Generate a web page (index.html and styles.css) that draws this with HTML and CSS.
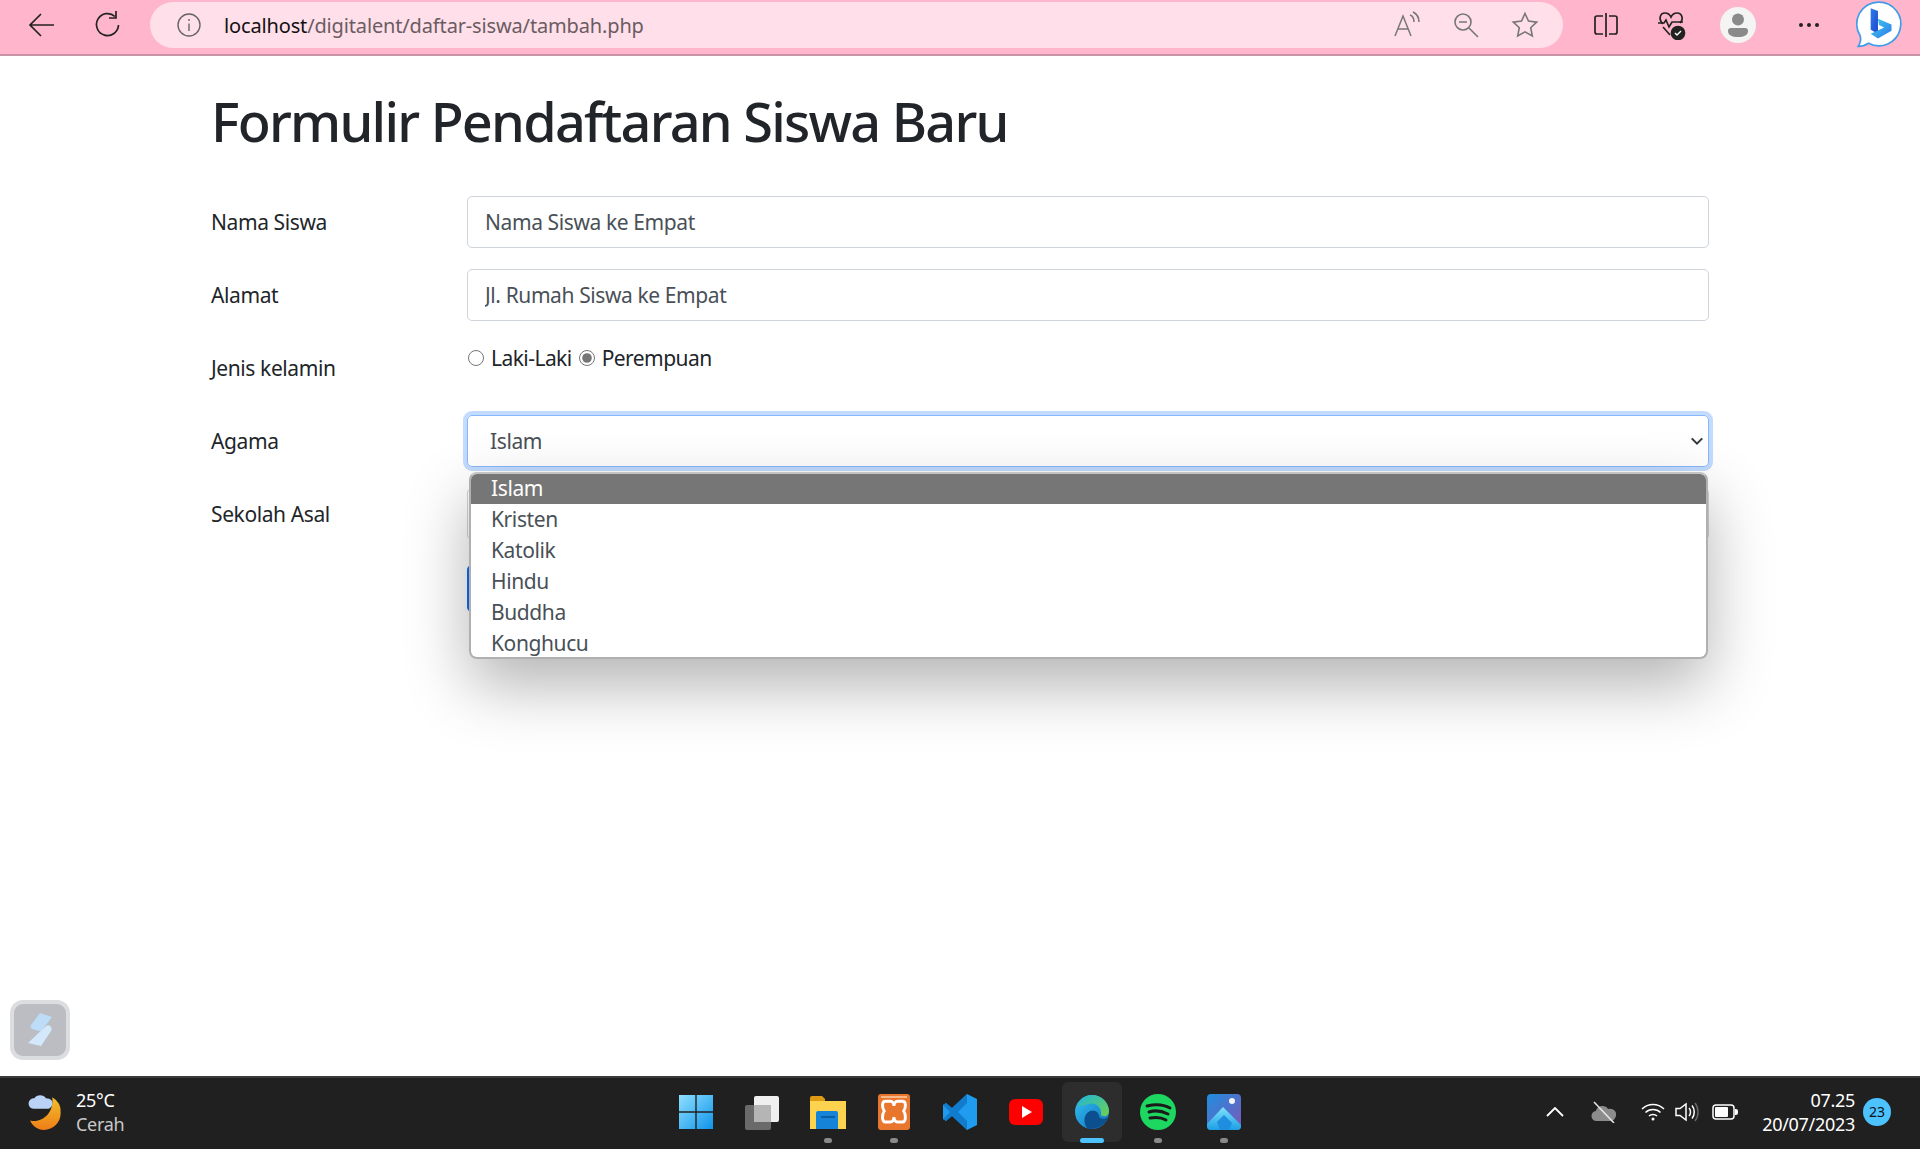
FILE: index.html
```html
<!DOCTYPE html>
<html lang="id">
<head>
    <meta charset="UTF-8">
    <meta name="viewport" content="width=device-width, initial-scale=1.0">
    <title>Formulir Pendaftaran Siswa Baru</title>
    <link rel="stylesheet" href="styles.css">
</head>
<body>
    <!-- toolbar browser -->
    <header class="toolbar">
        <button class="tool tool-back" type="button">
            <svg width="28" height="28" viewBox="0 0 28 28" fill="none" stroke="#222" stroke-width="1.7"><path d="M2 14h24M13 3L2 14l11 11"/></svg>
        </button>
        <button class="tool tool-reload" type="button">
            <svg width="28" height="28" viewBox="0 0 28 28" fill="none" stroke="#222" stroke-width="1.7"><path d="M21 5.500A11 11 0 1 0 24.500 14"/><path d="M22 0v7h-7"/></svg>
        </button>
        <div class="address">
            <svg class="addr-info" width="26" height="26" viewBox="0 0 26 26" fill="none" stroke="#666" stroke-width="1.4"><circle cx="13" cy="13" r="11"/><path d="M13 11.500V19M13 7v2"/></svg>
            <div class="url"><span class="host">localhost</span>/digitalent/daftar-siswa/tambah.php</div>
            <div class="addr-tools">
                <svg width="28" height="28" viewBox="0 0 28 28" fill="none" stroke="#777" stroke-width="1.5"><path d="M2 25L10 5l8 20M5 18h10M17 4c3 1 4 4 4 7M20 1c4 2 6 6 6 10"/></svg>
                <svg width="28" height="28" viewBox="0 0 28 28" fill="none" stroke="#777" stroke-width="1.6"><circle cx="11" cy="11" r="8"/><path d="M7 11h8M17 17l9 9"/></svg>
                <svg width="28" height="28" viewBox="0 0 28 28" fill="none" stroke="#777" stroke-width="1.6"><path d="M14 2.500l3.500 7.600 8.200 1-6 5.600 1.600 8.200-7.300-4.100-7.300 4.100 1.600-8.200-6-5.600 8.200-1z"/></svg>
            </div>
        </div>
        <div class="tool-group">
            <span class="tool-slot">
                <svg width="26" height="26" viewBox="0 0 26 26" fill="none" stroke="#222" stroke-width="1.7"><path d="M10 4H4a2 2 0 0 0-2 2v14a2 2 0 0 0 2 2h6M16 4h6a2 2 0 0 1 2 2v14a2 2 0 0 1-2 2h-6M13 1v24"/></svg>
            </span>
            <span class="tool-slot">
                <svg width="30" height="30" viewBox="0 0 30 30" fill="none" stroke="#222" stroke-width="1.7"><path d="M6 14C1 9 3 3 8 3c3 0 5 2 6 4 1-2 3-4 6-4 5 0 7 6 3 10"/><path d="M1 13h6l2-3 3 7 3-5h11"/><path d="M6 17l7 8"/><circle cx="21" cy="23" r="6.500" fill="#222"/><path d="M18 23l2 2 4-4" stroke="#fff" stroke-width="1.4"/></svg>
            </span>
            <span class="tool-slot">
                <span class="avatar">
                    <svg width="24" height="26" viewBox="0 0 24 26" fill="#8a8a8a"><circle cx="12" cy="7.500" r="6"/><path d="M2 19a3 3 0 0 1 3-3h14a3 3 0 0 1 3 3c0 4-4 6-10 6S2 23 2 19z"/></svg>
                </span>
            </span>
            <span class="tool-slot tool-dots">
                <svg width="22" height="6" viewBox="0 0 22 6" fill="#222"><circle cx="3" cy="3" r="2"/><circle cx="11" cy="3" r="2"/><circle cx="19" cy="3" r="2"/></svg>
            </span>
            <span class="tool-slot tool-bing">
                <svg width="46" height="48" viewBox="0 0 46 48">
                    <defs>
                        <linearGradient id="bingA" x1="0" y1="0" x2="1" y2="1"><stop offset="0" stop-color="#2f7df0"/><stop offset="1" stop-color="#1b46c8"/></linearGradient>
                        <linearGradient id="bingB" x1="0" y1="0" x2="1" y2="1"><stop offset="0" stop-color="#3ed0f0"/><stop offset="1" stop-color="#2f77ea"/></linearGradient>
                    </defs>
                    <path d="M23 2a21 21 0 1 1-10 39.500c-3 2-6 3-10 3 2-3 3-6 2-10A21 21 0 0 1 23 2z" fill="#fff" stroke="#3f9be8" stroke-width="1.6"/>
                    <path d="M15 8l7 2.500v22l-7-4z" fill="url(#bingA)"/>
                    <path d="M22 18l13 5.500v6L22 37l-7-4.500 13-6-5-2.500z" fill="url(#bingB)"/>
                </svg>
            </span>
        </div>
    </header>

    <main class="page">
        <h1 class="page-title">Formulir Pendaftaran Siswa Baru</h1>
        <form class="form">
            <div class="row">
                <label class="row-label">Nama Siswa</label>
                <input class="field" type="text" value="Nama Siswa ke Empat">
            </div>
            <div class="row">
                <label class="row-label">Alamat</label>
                <input class="field" type="text" value="Jl. Rumah Siswa ke Empat">
            </div>
            <div class="row">
                <label class="row-label">Jenis kelamin</label>
                <div class="radios">
                    <input type="radio" name="jk" id="jk1"><label for="jk1">Laki-Laki</label>
                    <input type="radio" name="jk" id="jk2" checked><label for="jk2">Perempuan</label>
                </div>
            </div>
            <div class="row">
                <label class="row-label">Agama</label>
                <div class="select-wrap">
                    <div class="select-box">
                        <span>Islam</span>
                        <svg width="14" height="14" viewBox="0 0 16 16" fill="none" stroke="#343a40" stroke-width="2.4"><path d="M2 5l6 6 6-6"/></svg>
                    </div>
                    <ul class="select-menu">
                        <li class="is-active">Islam</li>
                        <li>Kristen</li>
                        <li>Katolik</li>
                        <li>Hindu</li>
                        <li>Buddha</li>
                        <li>Konghucu</li>
                    </ul>
                </div>
            </div>
            <div class="row">
                <label class="row-label">Sekolah Asal</label>
                <input class="field" type="text">
            </div>
            <div class="row row-submit">
                <span></span>
                <button class="btn-submit" type="button"></button>
            </div>
        </form>

        <div class="floating-app">
            <svg width="44" height="44" viewBox="0 0 44 44">
                <path d="M22 5l12 4-10 13c-1 1-2 1-3 1l-7-2c-1-1-2-2-1-4z" fill="#bcdcf7"/>
                <path d="M28 18c3-2 7 1 5 5L23 38l-13-3z" fill="#d3e8fa"/>
            </svg>
        </div>
    </main>

    <!-- taskbar windows -->
    <footer class="taskbar">
        <div class="weather">
            <svg width="40" height="38" viewBox="0 0 38 36">
                <defs><linearGradient id="moon" x1="0" y1="0" x2="0" y2="1"><stop offset="0" stop-color="#f2c02b"/><stop offset="1" stop-color="#ef7d18"/></linearGradient></defs>
                <path d="M24 4a16 16 0 0 1 8 15c0 9-7 16-16 16C10 35 5 31 3 26c10 3 23-6 21-22z" fill="url(#moon)"/>
                <path d="M6 15a5 5 0 0 1 1-10c2-4 9-4 11 0 5 0 7 3 6 6-1 3-3 4-5 4z" fill="#b9d2f5"/>
            </svg>
            <div class="weather-text">
                <div class="temp">25°C</div>
                <div class="cond">Cerah</div>
            </div>
        </div>
        <div class="apps">
            <span class="app">
                <svg width="36" height="36" viewBox="0 0 36 36">
                    <defs><linearGradient id="winA" x1="0" y1="0" x2="1" y2="1"><stop offset="0" stop-color="#8fe0ff"/><stop offset="1" stop-color="#0f94ea"/></linearGradient></defs>
                    <path d="M1 1h16.300v16.300H1zM18.700 1H35v16.300H18.700zM1 18.700h16.300V35H1zM18.700 18.700H35V35H18.700z" fill="url(#winA)"/>
                </svg>
            </span>
            <span class="app">
                <svg width="36" height="36" viewBox="0 0 36 36">
                    <rect x="1" y="11" width="26" height="25" rx="2" fill="#6a6a6a"/>
                    <rect x="10" y="2" width="25" height="26" rx="2" fill="#f0f0f0"/>
                    <rect x="10" y="11" width="17" height="17" fill="#b5b5b5"/>
                </svg>
            </span>
            <span class="app has-dot">
                <svg width="38" height="36" viewBox="0 0 38 36">
                    <path d="M1 4a2 2 0 0 1 2-2h10l3 3v8H1z" fill="#dd9a12"/>
                    <path d="M1 7h36v28H1z" fill="#fcd24f"/>
                    <path d="M7 19a2 2 0 0 1 2-2h18a2 2 0 0 1 2 2v16H7z" fill="#1584d8"/>
                    <path d="M12 23h14" stroke="#0c4f8e" stroke-width="1.500"/>
                </svg>
            </span>
            <span class="app has-dot">
                <svg width="36" height="38" viewBox="0 0 36 38">
                    <rect x="2" y="1" width="32" height="36" rx="3" fill="#e8762d"/>
                    <rect x="5" y="3" width="26" height="2" fill="#f7b98a"/>
                    <path transform="translate(-4 -4) scale(1.220)" d="M11 10h4c2 0 3 2 3 4 0-2 1-4 3-4h4c3 0 3 5 1 8 2 3 2 9-1 9h-4c-2 0-3-2-3-4 0 2-1 4-3 4h-4c-3 0-3-6-1-9-2-3-2-8 1-8z" fill="none" stroke="#fff" stroke-width="2.400"/>
                </svg>
            </span>
            <span class="app">
                <svg width="36" height="38" viewBox="0 0 36 38">
                    <path d="M25 1l10 5v26l-10 5-15-14-6 5-3-2v-14l3-2 6 5z" fill="#1f9cf0"/>
                    <path d="M25 1v36L10 23l-6 5-3-2 7-7-7-7 3-2 6 5z" fill="#0b6fbf" opacity=".7"/>
                    <path d="M25 10v18l-9-9z" fill="#1f9cf0"/>
                </svg>
            </span>
            <span class="app">
                <svg width="34" height="26" viewBox="0 0 34 26"><rect x="0" y="0" width="34" height="26" rx="6" fill="#f00"/><path d="M13 7l10 6-10 6z" fill="#fff"/></svg>
            </span>
            <span class="app is-current">
                <svg width="36" height="36" viewBox="0 0 36 36">
                    <defs>
                        <linearGradient id="edgeA" x1="0" y1="0" x2="1" y2="1"><stop offset="0" stop-color="#35c1f1"/><stop offset="1" stop-color="#0b6fbf"/></linearGradient>
                        <linearGradient id="edgeB" x1="0" y1="0" x2="1" y2="1"><stop offset="0" stop-color="#1fb6d6"/><stop offset="1" stop-color="#6ed04f"/></linearGradient>
                    </defs>
                    <circle cx="18" cy="18" r="17" fill="url(#edgeA)"/>
                    <path d="M4 12C7 4 13 1 18 1c10 0 17 8 17 16 0 6-6 6-8 4 1-8-6-13-12-11-5 1-9 3-11 2z" fill="url(#edgeB)"/>
                    <path d="M14 35c-5-5-5-15 2-18 5-2 9 2 9 5 0 3 6 4 9 1-2 7-11 13-20 12z" fill="#0c4f8e"/>
                </svg>
            </span>
            <span class="app has-dot">
                <svg width="36" height="36" viewBox="0 0 36 36" fill="none">
                    <circle cx="18" cy="18" r="18" fill="#1ed760"/>
                    <path d="M7 12c8-2 16-2 23 2M9 18c6-2 13-1 19 2M10 24c5-1 11-1 16 2" stroke="#1b1b1b" stroke-width="3" stroke-linecap="round"/>
                </svg>
            </span>
            <span class="app has-dot">
                <svg width="34" height="36" viewBox="0 0 34 36">
                    <defs>
                        <linearGradient id="photoA" x1="0" y1="0" x2="1" y2="1"><stop offset="0" stop-color="#1f8ee0"/><stop offset="1" stop-color="#7d57b8"/></linearGradient>
                        <linearGradient id="photoB" x1="0" y1="0" x2="0" y2="1"><stop offset="0" stop-color="#7fe3fb"/><stop offset="1" stop-color="#1c9ee6"/></linearGradient>
                    </defs>
                    <rect width="34" height="36" rx="4" fill="url(#photoA)"/>
                    <circle cx="25" cy="7" r="3" fill="#f4f4f4"/>
                    <path d="M0 30l16-17 18 18v1a4 4 0 0 1-4 4H4a4 4 0 0 1-4-4z" fill="url(#photoB)"/>
                    <path d="M10 28l7-7 8 8-3 7H13z" fill="#1f8ee0"/>
                </svg>
            </span>
        </div>
        <div class="tray">
            <svg class="tray-chevron" width="18" height="10" viewBox="0 0 18 10" fill="none" stroke="#fff" stroke-width="1.800"><path d="M1 9l8-8 8 8"/></svg>
            <svg class="tray-cloud" width="26" height="22" viewBox="0 0 26 22">
                <path d="M6 20a5 5 0 0 1-1-10c1-5 9-7 12-2 5-1 9 2 8 7-1 3-3 5-5 5z" fill="#8c8c8c"/>
                <path d="M3 1l20 21" stroke="#e8e8e8" stroke-width="1.500"/>
            </svg>
            <svg class="tray-wifi" width="24" height="18" viewBox="0 0 24 18" fill="none" stroke="#fff" stroke-width="1.500"><path d="M1 6c6-6 16-6 22 0M4.500 9.500c4-4 11-4 15 0M8 13c2-2 6-2 8 0"/><circle cx="12" cy="16" r="1.500" fill="#fff" stroke="none"/></svg>
            <svg class="tray-sound" width="24" height="20" viewBox="0 0 24 20" fill="none" stroke="#fff" stroke-width="1.500"><path d="M1 6.500h4L11 2v16l-6-4.500H1z"/><path d="M14 6c2 2 2 6 0 8M17 3.500c3 3.500 3 9.500 0 13"/><path d="M20 1c4 5 4 13 0 18" stroke="#666"/></svg>
            <svg class="tray-battery" width="26" height="16" viewBox="0 0 26 16"><rect x="1" y="1" width="21" height="14" rx="3" fill="none" stroke="#fff" stroke-width="1.500"/><rect x="3" y="3" width="13" height="10" rx="1" fill="#fff"/><path d="M23 5h1a2 2 0 0 1 2 2v2a2 2 0 0 1-2 2h-1z" fill="#fff"/></svg>
            <div class="clock">
                <div>07.25</div>
                <div>20/07/2023</div>
            </div>
            <span class="badge">23</span>
        </div>
    </footer>
</body>
</html>
```

FILE: styles.css
```css
* {
    box-sizing: border-box;
}
html, body {
    height: 100%;
}
body {
    margin: 0;
    display: flex;
    flex-direction: column;
    overflow: hidden;
    background-color: #fff;
    color: #212529;
    font-family: "Noto Sans", "Open Sans", sans-serif;
}

/* toolbar browser */
.toolbar {
    height: 56px;
    flex: none;
    display: flex;
    align-items: center;
    padding-bottom: 4px;
    background-color: #ffb6cd;
    border-bottom: 2px solid #c994a8;
}
.tool {
    width: 28px;
    height: 28px;
    padding: 0;
    border: 0;
    background: none;
    flex: none;
}
.tool-back {
    margin-left: 28px;
}
.tool-reload {
    margin-left: 38px;
}
.address {
    width: 1413px;
    height: 46px;
    margin-left: 28px;
    padding: 0 24px 0 26px;
    flex: none;
    display: flex;
    align-items: center;
    border-radius: 23px;
    background-color: #ffdfe9;
}
.url {
    margin-left: 22px;
    font-size: 20px;
    letter-spacing: -0.15px;
    color: #6a5c62;
}
.host {
    color: #111;
}
.addr-tools {
    margin-left: auto;
    display: flex;
    gap: 31px;
}
.tool-group {
    display: flex;
    align-items: center;
    margin-left: 10px;
}
.tool-slot {
    width: 66px;
    display: flex;
    justify-content: center;
    align-items: center;
}
.tool-dots {
    margin-left: 5px;
}
.tool-bing {
    margin-left: 4px;
}
.tool-bing svg {
    width: 50px;
    height: 50px;
}
.avatar {
    width: 36px;
    height: 36px;
    display: flex;
    justify-content: center;
    align-items: center;
    border-radius: 50%;
    background-color: #f4f4f4;
}

/* formulir */
.page {
    flex: 1;
    position: relative;
    padding: 0 211px;
}
.page-title {
    margin: 33px 0 42px;
    font-size: 54px;
    line-height: 1.2;
    font-weight: 500;
    letter-spacing: -1.75px;
}
.row {
    display: grid;
    grid-template-columns: 256px 1fr;
    min-height: 52px;
    margin-bottom: 21px;
    font-size: 21px;
    letter-spacing: -0.4px;
}
.row-label {
    line-height: 52px;
}
.field {
    height: 52px;
    width: 100%;
    padding: 0 17px;
    border: 1px solid #ced4da;
    border-radius: 5px;
    font-family: inherit;
    font-size: 21px;
    letter-spacing: -0.4px;
    color: #495057;
    background-color: #fff;
}
.radios {
    display: flex;
    align-items: center;
    height: 32px;
    gap: 7px;
    padding-left: 1px;
}
.radios input {
    width: 16px;
    height: 16px;
    margin: 0;
    accent-color: #767676;
}
.radios label {
    margin-right: 0;
    letter-spacing: -0.55px;
}
.select-wrap {
    position: relative;
}
.select-box {
    height: 52px;
    padding: 0 4px 0 22px;
    display: flex;
    align-items: center;
    justify-content: space-between;
    border: 1px solid #86b7fe;
    border-radius: 5px;
    box-shadow: 0 0 0 4px #c2dbfe;
    color: #495057;
}
.select-menu {
    position: absolute;
    z-index: 5;
    top: 57px;
    left: 2px;
    right: 1px;
    height: 187px;
    margin: 0;
    padding: 0;
    list-style: none;
    overflow: hidden;
    border: 2px solid #b0b0b0;
    border-top-color: #c4c4c4;
    border-radius: 8px;
    background-color: #fff;
    color: #495057;
    box-shadow: 0 26px 64px rgba(0, 0, 0, 0.3);
}
.select-menu li {
    height: 31px;
    line-height: 28px;
    padding-left: 20px;
}
.select-menu li.is-active {
    height: 30px;
    margin-bottom: 1px;
    background-color: #767676;
    color: #fff;
}
.row-submit {
    margin-top: 25px;
}
.btn-submit {
    width: 110px;
    height: 47px;
    border: 0;
    border-radius: 5px;
    background-color: #0d6efd;
}
.floating-app {
    position: absolute;
    left: 10px;
    bottom: 16px;
    width: 60px;
    height: 60px;
    display: flex;
    justify-content: center;
    align-items: center;
    border: 4px solid #dcdde0;
    border-radius: 13px;
    background-color: #bcbdc2;
}

/* taskbar */
.taskbar {
    height: 73px;
    flex: none;
    display: grid;
    grid-template-columns: 1fr auto 1fr;
    align-items: center;
    padding-bottom: 4px;
    background-color: #202020;
    border-top: 2px solid #3a3a3a;
    color: #fff;
    font-size: 18px;
}
.weather {
    display: flex;
    align-items: center;
    margin-left: 27px;
    gap: 9px;
}
.weather-text {
    line-height: 24px;
    letter-spacing: -0.3px;
}
.cond {
    color: #c8c8c8;
}
.apps {
    display: flex;
    align-items: center;
}
.app {
    position: relative;
    width: 60px;
    height: 60px;
    margin: 0 3px;
    display: flex;
    justify-content: center;
    align-items: center;
    border-radius: 6px;
}
.app.is-current {
    background-color: #2d2d2d;
}
.app.has-dot::after,
.app.is-current::after {
    content: "";
    position: absolute;
    left: 50%;
    bottom: -1px;
    width: 8px;
    height: 5px;
    margin-left: -4px;
    border-radius: 3px;
    background-color: #8a8a8a;
}
.app.is-current::after {
    width: 24px;
    margin-left: -12px;
    background-color: #4cc2ff;
}
.tray {
    display: flex;
    align-items: center;
    justify-content: flex-end;
    padding-right: 29px;
}
.tray-chevron {
    margin-right: 27px;
}
.tray-cloud {
    margin-right: 24px;
}
.tray-wifi {
    margin-right: 10px;
}
.tray-sound {
    margin-right: 13px;
}
.clock {
    margin-left: 24px;
    text-align: right;
    line-height: 24px;
    letter-spacing: -0.3px;
}
.badge {
    width: 28px;
    height: 28px;
    margin-left: 8px;
    display: flex;
    justify-content: center;
    align-items: center;
    border-radius: 50%;
    background-color: #4cc2ff;
    color: #111;
    font-size: 14px;
}
```
